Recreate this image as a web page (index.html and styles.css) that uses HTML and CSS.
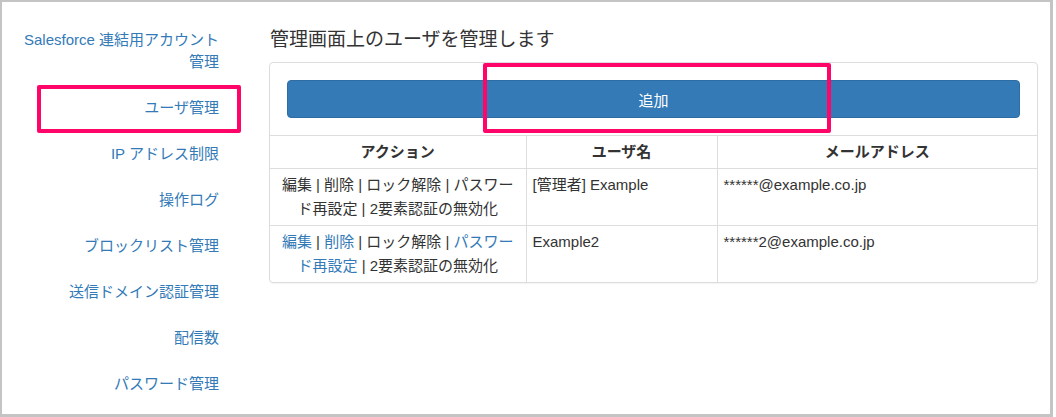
FILE: index.html
```html
<!DOCTYPE html>
<html lang="ja">
<head>
    <meta charset="UTF-8">
    <meta name="viewport" content="width=device-width, initial-scale=1.0">
    <title>ユーザ管理</title>
    <link rel="stylesheet" href="styles.css">
</head>
<body>
    <div class="frame">
        <ul class="sidebar">
            <li><a href="#">Salesforce 連結用アカウント管理</a></li>
            <li><a href="#">ユーザ管理</a></li>
            <li><a href="#">IP アドレス制限</a></li>
            <li><a href="#">操作ログ</a></li>
            <li><a href="#">ブロックリスト管理</a></li>
            <li><a href="#">送信ドメイン認証管理</a></li>
            <li><a href="#">配信数</a></li>
            <li><a href="#">パスワード管理</a></li>
        </ul>

        <div class="main">
            <h1 class="title">管理画面上のユーザを管理します</h1>
            <div class="panel">
                <div class="panel-body">
                    <button class="btn-add">追加</button>
                </div>
                <table class="users">
                    <colgroup>
                        <col class="col-action">
                        <col class="col-name">
                        <col class="col-mail">
                    </colgroup>
                    <thead>
                        <tr>
                            <th>アクション</th>
                            <th>ユーザ名</th>
                            <th>メールアドレス</th>
                        </tr>
                    </thead>
                    <tbody>
                        <tr>
                            <td class="actions">編集 | 削除 | ロック解除 | パスワード再設定 | 2要素認証の無効化</td>
                            <td>[管理者] Example</td>
                            <td>******@example.co.jp</td>
                        </tr>
                        <tr>
                            <td class="actions"><a href="#">編集</a> | <a href="#">削除</a> | ロック解除 | <a href="#">パスワード再設定</a> | 2要素認証の無効化</td>
                            <td>Example2</td>
                            <td>******2@example.co.jp</td>
                        </tr>
                    </tbody>
                </table>
            </div>
        </div>

        <!-- highlight marks -->
        <div class="mark mark-nav"></div>
        <div class="mark mark-add"></div>
    </div>
</body>
</html>
```

FILE: styles.css
```css
body {
    margin: 0;
    font-family: "Liberation Sans", "Noto Sans CJK JP", sans-serif;
    color: #333;
    background: #fff;
}
a {
    color: #337ab7;
    text-decoration: none;
}
.frame {
    position: relative;
    box-sizing: border-box;
    width: 1053px;
    height: 417px;
    border-style: solid;
    border-color: #c4c4c4;
    border-width: 2px 3px 3px 2px;
    display: flex;
    overflow: hidden;
}
.sidebar {
    list-style: none;
    margin: 0;
    padding: 15px 21px 0 7px;
    width: 210px;
    flex-shrink: 0;
    text-align: right;
    font-size: 15px;
    line-height: 22px;
}
.sidebar li {
    padding: 12px 0;
}
.main {
    margin-left: 29px;
    width: 769px;
    padding-top: 25px;
}
.title {
    margin: 0 0 9px 1px;
    font-size: 19px;
    font-weight: normal;
    line-height: 26px;
    color: #333;
}
.panel {
    border: 1px solid #ddd;
    border-radius: 4px;
    box-shadow: 0 1px 1px rgba(0,0,0,0.05);
    overflow: hidden;
}
.panel-body {
    padding: 17px;
}
.btn-add {
    display: block;
    width: 100%;
    height: 38px;
    background: #337ab7;
    border: 1px solid #2e6da4;
    border-radius: 4px;
    color: #fff;
    font-family: inherit;
    font-size: 15px;
    cursor: pointer;
}
.users {
    width: 100%;
    border-collapse: collapse;
    table-layout: fixed;
    font-size: 15px;
    line-height: 24px;
}
.col-action { width: 256px; }
.col-name { width: 191px; }
.col-mail { width: 320px; }
.users th,
.users td {
    border: 1px solid #ddd;
    padding: 4px 6px;
    vertical-align: top;
    text-align: left;
}
.users th {
    text-align: center;
    font-weight: bold;
}
.users tr > :first-child { border-left: 0; }
.users tr > :last-child { border-right: 0; }
.users tbody tr:last-child td { border-bottom: 0; }
.users td.actions {
    text-align: center;
    padding: 4px 8px;
}
.mark {
    position: absolute;
    box-sizing: border-box;
    border: 4px solid #ff0569;
    border-radius: 2px;
}
.mark-nav {
    left: 35px;
    top: 83px;
    width: 204px;
    height: 48px;
}
.mark-add {
    left: 481px;
    top: 61px;
    width: 348px;
    height: 70px;
}
```
